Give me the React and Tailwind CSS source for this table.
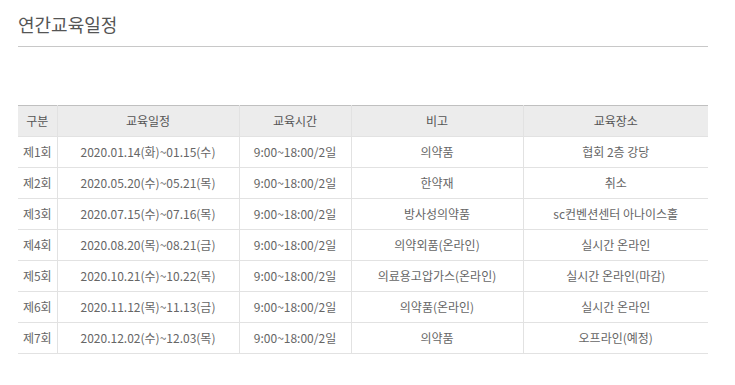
import React from 'react';

const rows = [
  ['제1회', '2020.01.14(화)~01.15(수)', '9:00~18:00/2일', '의약품', '협회 2층 강당'],
  ['제2회', '2020.05.20(수)~05.21(목)', '9:00~18:00/2일', '한약재', '취소'],
  ['제3회', '2020.07.15(수)~07.16(목)', '9:00~18:00/2일', '방사성의약품', 'sc컨벤션센터 아나이스홀'],
  ['제4회', '2020.08.20(목)~08.21(금)', '9:00~18:00/2일', '의약외품(온라인)', '실시간 온라인'],
  ['제5회', '2020.10.21(수)~10.22(목)', '9:00~18:00/2일', '의료용고압가스(온라인)', '실시간 온라인(마감)'],
  ['제6회', '2020.11.12(목)~11.13(금)', '9:00~18:00/2일', '의약품(온라인)', '실시간 온라인'],
  ['제7회', '2020.12.02(수)~12.03(목)', '9:00~18:00/2일', '의약품', '오프라인(예정)'],
];

const headers = ['구분', '교육일정', '교육시간', '비고', '교육장소'];

/**
 * Annual training schedule
 */
const App = () => {
  return (
    <div
      className="w-[735px] h-[385px] bg-white pl-[18px] pt-[12px]"
      style={{ fontFamily: '"Noto Sans CJK KR", "Noto Sans", sans-serif' }}
    >
      <div className="w-[690px]">
        <h2 className="text-[18px] leading-[24px] text-[#555] font-normal mb-[10px]">연간교육일정</h2>
        <div className="border-t border-[#c8c8c8]" />

        <table className="mt-[58px] w-[690px] table-fixed border-collapse text-[12px] text-[#666]">
          <colgroup>
            <col className="w-[39px]" />
            <col className="w-[182px]" />
            <col className="w-[112px]" />
            <col className="w-[172px]" />
            <col className="w-[185px]" />
          </colgroup>
          <thead>
            <tr className="h-[31px] bg-[#ececec] border-t border-[#c0c0c0]">
              {headers.map((h, i) => (
                <th
                  key={h}
                  className={`font-normal text-[#555] text-center p-0 border-b border-[#e2e2e2] ${i < headers.length - 1 ? 'border-r' : ''}`}
                >
                  {h}
                </th>
              ))}
            </tr>
          </thead>
          <tbody>
            {rows.map(row => (
              <tr key={row[0]} className="h-[31px]">
                {row.map((cell, i) => (
                  <td
                    key={i}
                    className={`text-center p-0 whitespace-nowrap border-b border-[#e2e2e2] ${i < row.length - 1 ? 'border-r' : ''}`}
                  >
                    {cell}
                  </td>
                ))}
              </tr>
            ))}
          </tbody>
        </table>
      </div>
    </div>
  );
};

export default App;
